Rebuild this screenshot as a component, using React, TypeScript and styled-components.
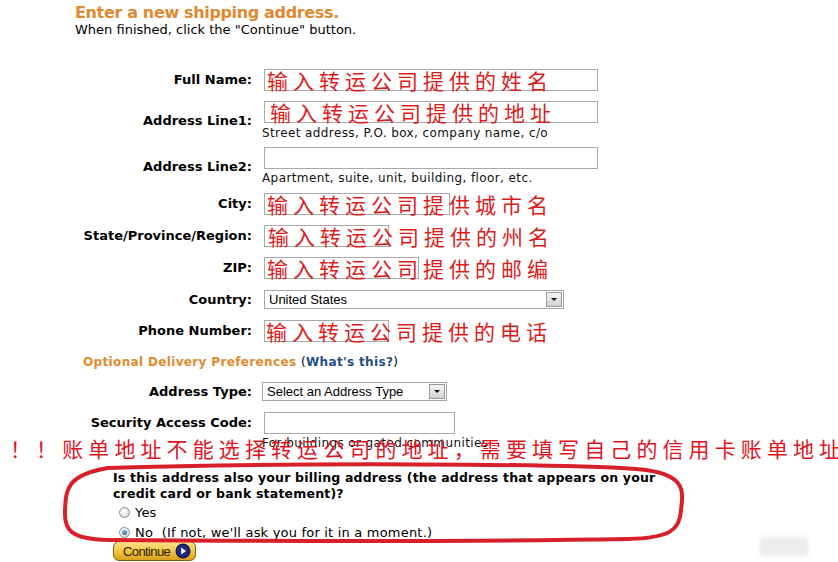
import React from "react";
import styled, { createGlobalStyle } from "styled-components";

const GlobalStyle = createGlobalStyle`
  html, body { margin: 0; padding: 0; background: #fff; }
  body { font-family: "DejaVu Sans", Verdana, sans-serif; color: #000; }
`;

const Page = styled.div`
  position: relative;
  width: 838px;
  height: 562px;
  overflow: hidden;
  padding-top: 4px;
  box-sizing: border-box;
`;

const Header = styled.div`
  padding-left: 75px;
`;

const Title = styled.h1`
  margin: 0;
  font-size: 16px;
  line-height: 18px;
  font-weight: bold;
  letter-spacing: -0.35px;
  color: #df8a2e;
`;

const Subtitle = styled.p`
  margin: 0;
  font-size: 13px;
  line-height: 16px;
`;

const Form = styled.div`
  display: flex;
  flex-direction: column;
`;

const Row = styled.div<{ $mt: number }>`
  display: flex;
  align-items: center;
  gap: 12px;
  margin-top: ${(p) => p.$mt}px;
`;

const Label = styled.div`
  width: 252px;
  flex: none;
  text-align: right;
  font-size: 13px;
  font-weight: bold;
  line-height: 16px;
`;

const FieldCol = styled.div<{ $dx?: number }>`
  display: flex;
  flex-direction: column;
  margin-left: ${(p) => p.$dx ?? 0}px;
`;

const Box = styled.div<{ $w: number }>`
  position: relative;
  width: ${(p) => p.$w}px;
  height: 22px;
  box-sizing: border-box;
  border: 1px solid #a9a9a9;
  background: #fff;
`;

const Filled = styled.span<{ $dx: number }>`
  position: absolute;
  left: ${(p) => p.$dx}px;
  top: -1px;
  white-space: nowrap;
  font-family: "Noto Sans CJK SC", sans-serif;
  font-size: 21px;
  line-height: 22px;
  letter-spacing: 5px;
  color: #dd1c1c;
`;

const Hint = styled.div<{ $mt: number }>`
  margin-top: ${(p) => p.$mt}px;
  margin-left: -2px;
  font-size: 12px;
  line-height: 16px;
  letter-spacing: 0.4px;
  color: #111;
  white-space: nowrap;
`;

const Select = styled.div<{ $w: number }>`
  display: flex;
  align-items: center;
  justify-content: space-between;
  width: ${(p) => p.$w}px;
  height: 19px;
  box-sizing: border-box;
  border: 1px solid #a5a5a5;
  padding-left: 4px;
  font-family: "Liberation Sans", Arial, sans-serif;
  font-size: 13px;
  background: #fff;
`;

const SelectButton = styled.span`
  width: 16px;
  height: 15px;
  margin-right: 1px;
  box-sizing: border-box;
  border: 1px solid #9a9a9a;
  background: linear-gradient(#f6f6f6, #d2d2d2);
  display: flex;
  align-items: center;
  justify-content: center;
  &::after {
    content: "";
    border-left: 3px solid transparent;
    border-right: 3px solid transparent;
    border-top: 3px solid #111;
  }
`;

const SectionHead = styled.div<{ $mt: number }>`
  margin-top: ${(p) => p.$mt}px;
  padding-left: 83px;
  font-size: 12px;
  line-height: 16px;
  letter-spacing: 0.35px;
  color: #df8a2e;
  font-weight: bold;
`;

const Plain = styled.span`
  color: #000;
  font-weight: normal;
`;

const Link = styled.span`
  color: #1f4e8a;
  font-weight: bold;
`;

const HintRow = styled.div`
  padding-left: 264px;
`;

const Billing = styled.div`
  margin-top: 19px;
  padding-left: 113px;
  display: flex;
  flex-direction: column;
`;

const Question = styled.div`
  font-size: 12.5px;
  line-height: 16px;
  font-weight: bold;
  letter-spacing: 0.2px;
  white-space: nowrap;
`;

const RadioRow = styled.label`
  display: flex;
  align-items: center;
  gap: 5px;
  height: 20px;
  padding-left: 6px;
  font-size: 13px;
  letter-spacing: 0.2px;
  white-space: pre;
`;

const Radio = styled.span<{ $checked?: boolean }>`
  position: relative;
  flex: none;
  width: 11px;
  height: 11px;
  box-sizing: border-box;
  border-radius: 50%;
  border: 1px solid #8c8c8c;
  background: radial-gradient(circle at 40% 35%, #ffffff, #d4d4d4);
  &::after {
    content: "";
    display: ${(p) => (p.$checked ? "block" : "none")};
    position: absolute;
    inset: 2px;
    border-radius: 50%;
    background: radial-gradient(circle at 40% 35%, #7cc4e0, #1b4d68);
  }
`;

const ContinueButton = styled.button`
  align-self: flex-start;
  display: flex;
  align-items: center;
  gap: 5px;
  width: 83px;
  height: 20px;
  margin-top: -1px;
  padding: 0 2px 0 9px;
  box-sizing: border-box;
  border: 1px solid #7d5f14;
  border-radius: 6px;
  background: linear-gradient(#fbe48c, #f0c23c 55%, #d9a11c);
  font-family: "Liberation Sans Narrow", "Liberation Sans", Arial, sans-serif;
  font-size: 13px;
  letter-spacing: -0.6px;
  color: #2a2000;
  cursor: pointer;
`;

const Annotation = styled.div`
  position: absolute;
  left: 10px;
  top: 435px;
  white-space: nowrap;
  font-family: "Noto Sans CJK SC", sans-serif;
  font-size: 21px;
  line-height: 26px;
  letter-spacing: 5.1px;
  color: #e0141e;
`;

const Circle = styled.svg`
  position: absolute;
  left: 0;
  top: 0;
  pointer-events: none;
`;

const Watermark = styled.div`
  position: absolute;
  left: 760px;
  top: 537px;
  width: 48px;
  height: 19px;
  border-radius: 4px;
  background: #ececec;
  filter: blur(2px);
`;

type FieldProps = {
  label: string;
  w: number;
  text?: string;
  dx?: number;
  mt: number;
  hint?: string;
  hintMt?: number;
};

const TextField: React.FC<FieldProps> = ({ label, w, text, dx = 2, mt, hint, hintMt = 1 }) => (
  <Row $mt={mt}>
    <Label>{label}</Label>
    <FieldCol>
      <Box $w={w}>{text && <Filled $dx={dx}>{text}</Filled>}</Box>
      {hint && <Hint $mt={hintMt}>{hint}</Hint>}
    </FieldCol>
  </Row>
);

export default function App() {
  return (
    <>
      <GlobalStyle />
      <Page>
        <Header>
          <Title>Enter a new shipping address.</Title>
          <Subtitle>When finished, click the "Continue" button.</Subtitle>
        </Header>
        <Form>
          <TextField mt={31} label="Full Name:" w={334} text="输入转运公司提供的姓名" dx={2} />
          <TextField
            mt={10}
            label="Address Line1:"
            w={334}
            text="输入转运公司提供的地址"
            dx={5}
            hint="Street address, P.O. box, company name, c/o"
            hintMt={2}
          />
          <TextField
            mt={6}
            label="Address Line2:"
            w={334}
            hint="Apartment, suite, unit, building, floor, etc."
            hintMt={1}
          />
          <TextField mt={7} label="City:" w={186} text="输入转运公司提供城市名" dx={2} />
          <TextField mt={10} label="State/Province/Region:" w={125} text="输入转运公司提供的州名" dx={3} />
          <TextField mt={10} label="ZIP:" w={155} text="输入转运公司提供的邮编" dx={2} />
          <Row $mt={11}>
            <Label>Country:</Label>
            <Select $w={300}>
              United States
              <SelectButton />
            </Select>
          </Row>
          <TextField mt={11} label="Phone Number:" w={125} text="输入转运公司提供的电话" dx={1} />
          <SectionHead $mt={12}>
            Optional Delivery Preferences <Plain>(</Plain>
            <Link>What's this?</Link>
            <Plain>)</Plain>
          </SectionHead>
          <Row $mt={12}>
            <Label>Address Type:</Label>
            <FieldCol $dx={-2}>
              <Select $w={185}>
                Select an Address Type
                <SelectButton />
              </Select>
            </FieldCol>
          </Row>
          <TextField mt={11} label="Security Access Code:" w={191} />
          <HintRow>
            <Hint $mt={1}>For buildings or gated communities</Hint>
          </HintRow>
        </Form>
        <Billing>
          <Question>
            Is this address also your billing address (the address that appears on your
            <br />
            credit card or bank statement)?
          </Question>
          <RadioRow>
            <Radio />
            Yes
          </RadioRow>
          <RadioRow>
            <Radio $checked />
            {"No  (If not, we'll ask you for it in a moment.)"}
          </RadioRow>
          <ContinueButton>
            Continue
            <svg width="16" height="16" viewBox="0 0 16 16">
              <circle cx="8" cy="8" r="7.5" fill="#17195a" />
              <circle cx="8" cy="8" r="6" fill="#22287a" />
              <path d="M6.2 4.6 L11 8 L6.2 11.4 Z" fill="#fff" />
            </svg>
          </ContinueButton>
        </Billing>
        <Annotation>！！账单地址不能选择转运公司的地址，需要填写自己的信用卡账单地址</Annotation>
        <Circle width="838" height="562" viewBox="0 0 838 562">
          <path
            d="M108 468 C 300 462, 560 464, 636 469 C 688 473, 683 492, 681 510 C 680 530, 670 538, 628 539 C 450 542, 250 541, 108 540 C 70 539, 64 530, 65 510 C 66 490, 66 475, 108 468 Z"
            fill="none"
            stroke="#d8202a"
            strokeWidth="4"
          />
        </Circle>
        <Watermark />
      </Page>
    </>
  );
}
